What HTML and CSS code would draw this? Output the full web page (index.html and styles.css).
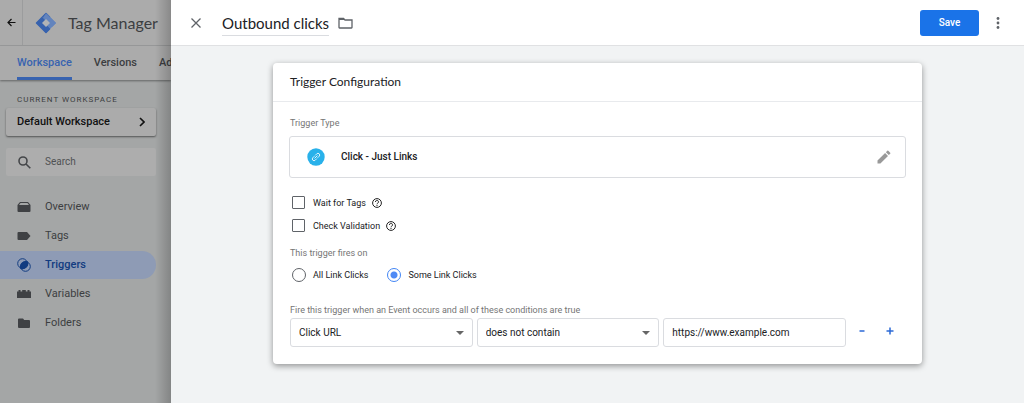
FILE: index.html
```html
<!DOCTYPE html>
<html lang="en">
	<head>
		<meta charset="utf-8">
		<meta name="viewport" content="width=device-width, initial-scale=1">
		<title>Tag Manager</title>
		<link rel="stylesheet" href="styles.css">
	</head>
	<body>
		<aside class="sidebar">
			<header class="brand">
				<button class="back" aria-label="Back">
					<svg width="9" height="9" viewBox="0 0 9 9"><path d="M8.5 4.5H1M4.5 1L1 4.5L4.5 8" fill="none" stroke="#111" stroke-width="1.2"/></svg>
				</button>
				<svg class="logo" width="22" height="22" viewBox="0 0 22 22">
					<path d="M11 1L21 11L11 21L7.500 17.500L14 11L7.500 4.500Z" fill="#6384bd"/>
					<path d="M11 1.500L1.500 11L11 20.500L14.500 17L8.500 11L14.500 5Z" fill="#3762ae" stroke="#3762ae" stroke-width="1.500" stroke-linejoin="round"/>
					<path d="M11 1.500L20.500 11L17 14.500L8 5.500" fill="#6384bd" stroke="#6384bd" stroke-linejoin="round"/>
					<path d="M11 7L15 11L11 15L7 11Z" fill="#b1b3b6"/>
				</svg>
				<span class="product">Tag Manager</span>
			</header>
			<nav class="tabs">
				<a class="active" href="#">Workspace</a>
				<a href="#">Versions</a>
				<a href="#">Admin</a>
			</nav>
			<div class="workspace">
				<h2>CURRENT WORKSPACE</h2>
				<button class="picker">Default Workspace
					<svg width="6" height="10" viewBox="0 0 6 10"><path d="M1 1L5 5L1 9" fill="none" stroke="#111" stroke-width="1.6"/></svg>
				</button>
				<label class="search">
					<svg width="13" height="13" viewBox="0 0 13 13" fill="none" stroke="#444649" stroke-width="1.6"><circle cx="5" cy="5" r="4"/><path d="M8 8L12.300 12.300"/></svg>
					<input type="text" placeholder="Search" aria-label="Search">
				</label>
			</div>
			<nav class="menu">
				<a href="#">
					<svg width="14" height="14" viewBox="0 0 14 14"><path d="M3 2H11L13.500 5V11Q13.500 12 12.500 12H1.500Q.5 12 .5 11V5Z" fill="#3f4144"/><path d="M2 5L3.500 3H10.500L12 5Z" fill="#a4a6a6"/></svg>
					Overview
				</a>
				<a href="#">
					<svg width="14" height="14" viewBox="0 0 14 14"><path d="M1.500 3H10L13.500 7L10 11H1.500Q.5 11 .5 10V4Q.5 3 1.500 3Z" fill="#3f4144"/></svg>
					Tags
				</a>
				<a class="active" href="#">
					<svg width="14" height="14" viewBox="0 0 14 14"><circle cx="5.500" cy="5.500" r="4.800" fill="none" stroke="#123c80"/><circle cx="8.500" cy="8.500" r="4.800" fill="none" stroke="#123c80"/><path d="M10.300 4A5 5 0 0 1 4 10.300A5 5 0 0 1 10.300 4Z" fill="#123c80" stroke="#123c80" stroke-width="1.500"/></svg>
					Triggers
				</a>
				<a href="#">
					<svg width="14" height="14" viewBox="0 0 14 14"><path d="M0 11V4.500H1.500V3H3.500V4.500H5.200V3H8.800V4.500H10.500V3H12.500V4.500H14V11Z" fill="#3f4144"/></svg>
					Variables
				</a>
				<a href="#">
					<svg width="14" height="14" viewBox="0 0 14 14"><path d="M2 2.500H6L7.200 4H12Q13 4 13 5V11Q13 12 12 12H2Q1 12 1 11V3.500Q1 2.500 2 2.500Z" fill="#3f4144"/></svg>
					Folders
				</a>
			</nav>
		</aside>

		<main class="panel">
			<header class="topbar">
				<button class="close" aria-label="Close">
					<svg width="10" height="10" viewBox="0 0 10 10"><path d="M.5 .5L9.500 9.500M9.500 .5L.5 9.500" stroke="#5f6368" stroke-width="1.300"/></svg>
				</button>
				<h1>Outbound clicks</h1>
				<button class="folder" aria-label="Move to folder">
					<svg width="15" height="12" viewBox="0 0 15 12"><path d="M1 10.500V1.500H5.500L7 3H14V10.500Q14 11 13.500 11H1.500Q1 11 1 10.500Z" fill="none" stroke="#5f6368" stroke-width="1.300"/><path d="M1 1H5.500L7 3H1Z" fill="#5f6368"/></svg>
				</button>
				<button class="save">Save</button>
				<button class="more" aria-label="More actions">
					<svg width="4" height="12" viewBox="0 0 4 12" fill="#5f6368"><circle cx="2" cy="1.500" r="1.400"/><circle cx="2" cy="6" r="1.400"/><circle cx="2" cy="10.500" r="1.400"/></svg>
				</button>
			</header>

			<section class="card">
				<h2>Trigger Configuration</h2>
				<form class="config">
					<p class="caption">Trigger Type</p>
					<div class="type">
						<svg width="18" height="18" viewBox="0 0 18 18"><circle cx="9" cy="9" r="8.700" fill="#29b1ea"/><g transform="rotate(-45 9 9)" fill="none" stroke="#fff" stroke-width=".8"><path d="M8.500 7.300H6.200A1.700 1.700 0 0 0 6.200 10.700H8.500M9.500 7.300H11.800A1.700 1.700 0 0 1 11.800 10.700H9.500M7 9H11"/></g></svg>
						<strong>Click - Just Links</strong>
						<button type="button" aria-label="Edit trigger type">
							<svg width="14" height="14" viewBox="0 0 14 14" fill="#999"><path d="M.5 10.600V13.500H3.400L11 5.900L8.100 3ZM8.900 2.200L11.800 5.100L13.200 3.700Q13.700 3.200 13.200 2.700L11.300 .8Q10.800 .3 10.300 .8Z"/></svg>
						</button>
					</div>

					<div class="check">
						<input type="checkbox" id="wait"><label for="wait">Wait for Tags</label>
						<svg width="10" height="10" viewBox="0 0 10 10" fill="none" stroke="#222"><circle cx="5" cy="5" r="4.400"/><path d="M3.500 4A1.500 1.500 0 1 1 5.800 5.100Q5 5.500 5 6.300M5 7V8"/></svg>
					</div>
					<div class="check">
						<input type="checkbox" id="validate"><label for="validate">Check Validation</label>
						<svg width="10" height="10" viewBox="0 0 10 10" fill="none" stroke="#222"><circle cx="5" cy="5" r="4.400"/><path d="M3.500 4A1.500 1.500 0 1 1 5.800 5.100Q5 5.500 5 6.300M5 7V8"/></svg>
					</div>

					<p class="caption fires">This trigger fires on</p>
					<div class="radios">
						<label><input type="radio" name="fires">All Link Clicks</label>
						<label><input type="radio" name="fires" checked>Some Link Clicks</label>
					</div>

					<p class="caption">Fire this trigger when an Event occurs and all of these conditions are true</p>
					<div class="condition">
						<div class="select">
							<select aria-label="Variable"><option>Click URL</option></select>
						</div>
						<div class="select">
							<select aria-label="Operator"><option>does not contain</option></select>
						</div>
						<input type="text" value="https://www.example.com" aria-label="Value">
						<button type="button" aria-label="Remove condition"><svg width="8" height="8" viewBox="0 0 8 8"><path d="M1.500 4H6.500" stroke="#2b69d6" stroke-width="1.500"/></svg></button>
						<button type="button" aria-label="Add condition"><svg width="8" height="8" viewBox="0 0 8 8"><path d="M.5 4H7.500M4 .5V7.500" stroke="#2b69d6" stroke-width="1.500"/></svg></button>
					</div>
				</form>
			</section>
		</main>
	</body>
</html>
```
FILE: styles.css
```css
* {
	box-sizing: border-box;
}
body {
	display: flex;
	min-height: 100vh;
	margin: 0;
	background: #f1f3f4;
	color: #202124;
	font: 10px/14px Roboto, sans-serif;
}
h1,
h2,
p {
	margin: 0;
	font-weight: 400;
}
a {
	color: inherit;
	text-decoration: none;
}
button,
input,
select {
	font: inherit;
	color: inherit;
}
button {
	padding: 0;
	border: 0;
	background: none;
}
svg {
	display: block;
	flex: none;
}

/* sidebar, dimmed behind the open panel */
.sidebar {
	position: relative;
	flex: 0 0 171px;
	overflow: hidden;
	background: #a4a6a6;
	color: #3c3e41;
}
.sidebar::after {
	content: "";
	position: absolute;
	inset: 0 0 0 auto;
	width: 16px;
	background: linear-gradient(to right, transparent, rgba(0, 0, 0, 0.2));
}
.brand {
	display: flex;
	align-items: center;
	height: 46px;
	border-bottom: 1px solid #9b9c9d;
	background: #ababab;
}
.back {
	display: flex;
	align-items: center;
	justify-content: center;
	width: 23px;
	height: 45px;
	border-right: 1px solid #9b9c9d;
}
.logo {
	margin: 0 11px 0 12px;
}
.product {
	font: 16px/20px Lato, sans-serif;
	white-space: nowrap;
}
.tabs {
	display: flex;
	gap: 22px;
	height: 34px;
	padding-left: 17px;
	background: #ababab;
	box-shadow: 0 1px 2px rgba(0, 0, 0, 0.4);
	font: 500 11px/34px Roboto, sans-serif;
}
.tabs .active {
	border-bottom: 3px solid #3863b0;
	color: #3863b0;
}
.workspace {
	padding: 13px 15px 0 6px;
}
.workspace h2 {
	margin: 0 11px 2px;
	font-size: 8px;
	line-height: 13px;
	white-space: nowrap;
	letter-spacing: 1px;
}
.picker {
	display: flex;
	align-items: center;
	justify-content: space-between;
	width: 100%;
	height: 28px;
	padding: 0 11px;
	border-radius: 2px;
	background: #ababab;
	box-shadow: 0 1px 2px rgba(0, 0, 0, 0.5);
	color: #111;
	font-size: 11px;
	font-weight: 500;
}
.search {
	display: flex;
	align-items: center;
	gap: 14px;
	height: 28px;
	margin-top: 12px;
	padding: 0 12px;
	border-radius: 2px;
	background: #adadad;
}
.search input {
	width: 100%;
	min-width: 0;
	padding: 0;
	border: 0;
	background: none;
}
.search input::placeholder {
	color: #505254;
}
.menu {
	display: grid;
	gap: 1px;
	margin: 17px 15px 0 0;
	font-size: 11px;
}
.menu a {
	display: flex;
	align-items: center;
	gap: 14px;
	height: 28px;
	padding-left: 17px;
	border-radius: 0 14px 14px 0;
}
.menu .active {
	background: #8e9bb5;
	color: #123c80;
	font-weight: 500;
}

/* panel */
.panel {
	flex: 1;
	min-width: 0;
}
.topbar {
	display: flex;
	align-items: center;
	height: 46px;
	padding: 0 20px;
	border-bottom: 1px solid #e0e1e3;
	background: #fff;
}
h1 {
	margin: 2px 9px 0 21px;
	border-bottom: 1px solid #dadce0;
	font: 15px/24px Lato, sans-serif;
}
.save {
	width: 59px;
	height: 26px;
	margin-left: auto;
	border-radius: 3px;
	background: #1a73e8;
	color: #fff;
	font-size: 10px;
	font-weight: 500;
}
.more {
	margin: 0 4px 0 17px;
}
.card {
	margin: 17px 102px;
	border-radius: 4px;
	background: #fff;
	box-shadow: 0 2px 6px rgba(0, 0, 0, 0.4);
}
.card h2 {
	padding: 9px 17px;
	border-bottom: 1px solid #e8eaed;
	font: 12px/20px Lato, sans-serif;
}
.config {
	padding: 14px 16px 17px;
}
.caption {
	padding-left: 1px;
	color: #757575;
	font-size: 9px;
}
.type {
	display: flex;
	align-items: center;
	height: 42px;
	margin: 6px 0 13px;
	padding: 0 14px 0 17px;
	border: 1px solid #dadce0;
	border-radius: 3px;
}
.type strong {
	margin: 0 auto 0 16px;
	font-weight: 500;
}
.check {
	display: flex;
	align-items: center;
	height: 23px;
	padding-left: 3px;
	font-size: 9px;
}
.check input {
	appearance: none;
	width: 13px;
	height: 13px;
	margin: 0 8px 0 0;
	border: 1px solid #5f6368;
	border-radius: 1px;
}
.check svg {
	margin-left: 6px;
}
.fires {
	margin-top: 9px;
}
.radios {
	display: flex;
	gap: 19px;
	margin: 8px 0 21px 3px;
	font-size: 9px;
}
.radios label {
	display: flex;
	align-items: center;
	gap: 7px;
}
.radios input {
	appearance: none;
	width: 14px;
	height: 14px;
	margin: 0;
	border: 1px solid #5f6368;
	border-radius: 50%;
}
.radios input:checked {
	border-color: #4285f4;
	background: radial-gradient(#4f8af5 3px, transparent 4px);
}
.condition {
	display: grid;
	grid-template-columns: repeat(3, 1fr) 24px 24px;
	gap: 4px;
	margin-top: 1px;
	padding: 0 4px 0 1px;
}
.select {
	position: relative;
}
.select::after {
	content: "";
	position: absolute;
	top: 13px;
	right: 9px;
	border: 4px solid transparent;
	border-top-color: #666;
	border-bottom: 0;
}
.condition select,
.condition input {
	appearance: none;
	width: 100%;
	min-width: 0;
	height: 29px;
	padding: 0 8px;
	border: 1px solid #dadce0;
	border-radius: 3px;
	background: #fff;
}
.condition button {
	display: flex;
	align-items: center;
	justify-content: center;
	height: 26px;
}
```
